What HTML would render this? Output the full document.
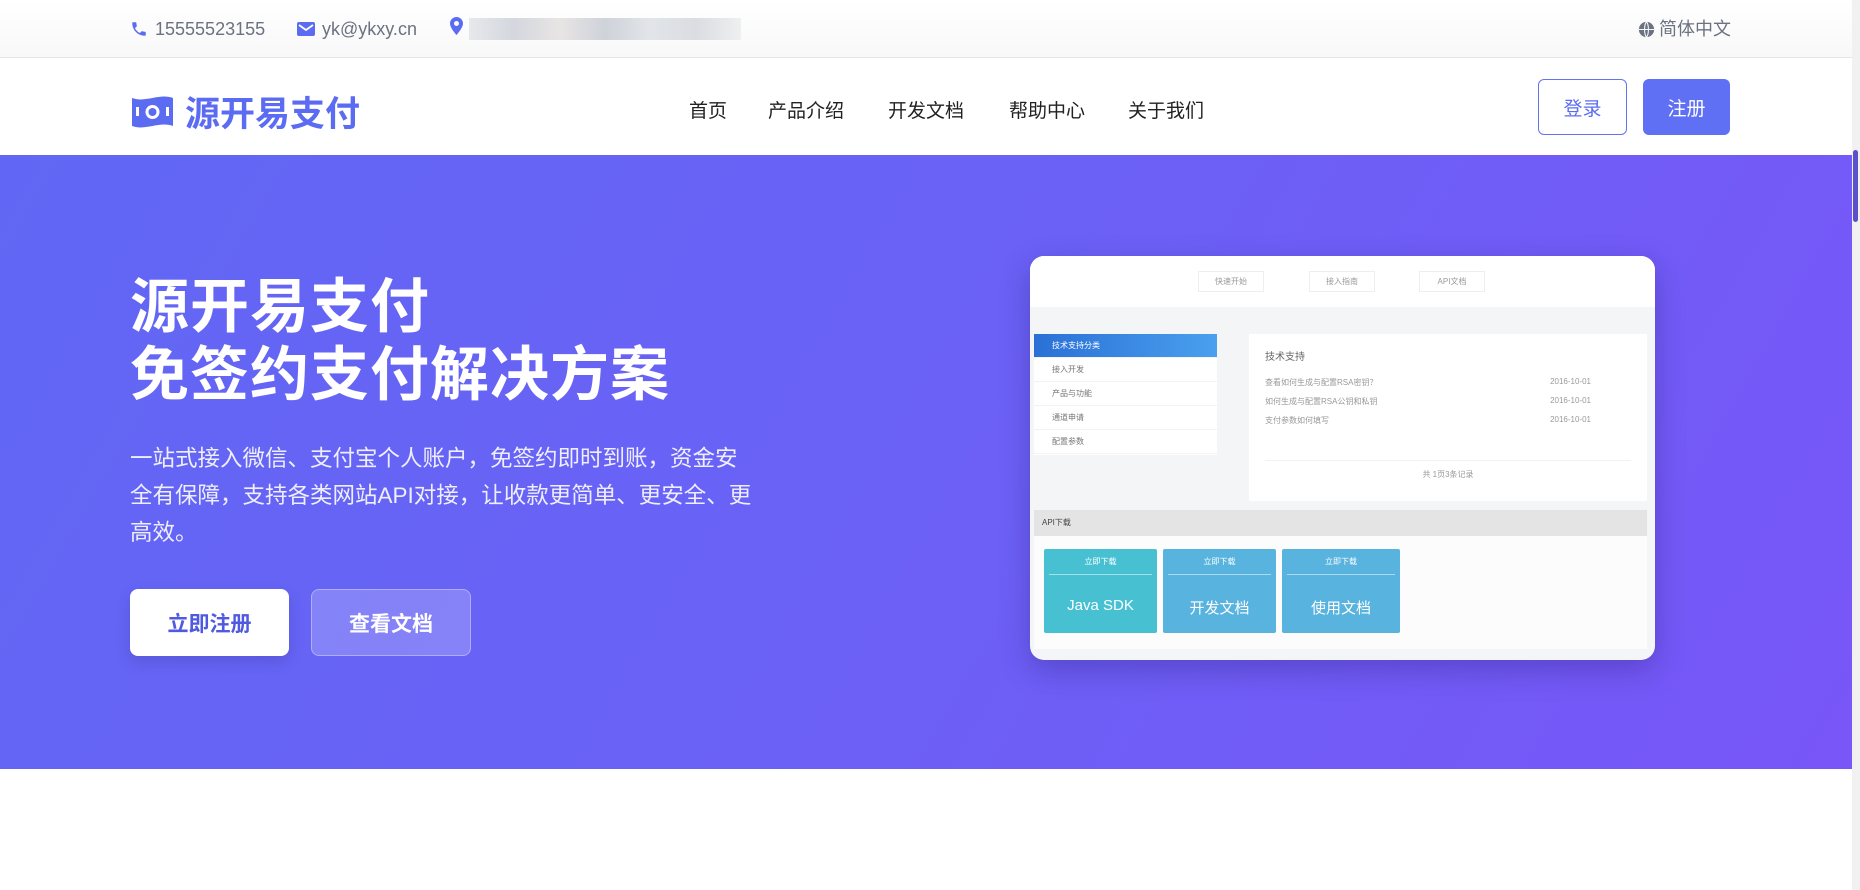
<!DOCTYPE html>
<html><head><meta charset="utf-8"><style>
*{margin:0;padding:0;box-sizing:border-box}
body{width:1860px;height:890px;overflow:hidden;background:#fff;font-family:"Liberation Sans","Noto Sans CJK SC",sans-serif;position:relative}
.top{position:absolute;left:0;top:0;width:1852px;height:58px;background:linear-gradient(#fff,#f8f8f8);border-bottom:1px solid #e6e6e6;color:#6b7280;font-size:18px}
.top .it{position:absolute;top:17px;display:flex;align-items:center;gap:7px;line-height:24px}
.blur{position:absolute;left:469px;top:18px;width:272px;height:22px;background:linear-gradient(90deg,#e4e6ea,#cfd3da,#e6e2e2,#c9ced6,#dfe2e6,#d6d9de,#eceef0);opacity:.9}
.nav{position:absolute;left:0;top:58px;width:1852px;height:97px;background:#fff}
.logo{position:absolute;left:130px;top:28px;display:flex;align-items:center;gap:10px;color:#5b6cf2;font-weight:bold;font-size:35px}
.menu a{position:absolute;top:42px;font-size:19px;color:#222;text-decoration:none;line-height:24px}
.btn1{position:absolute;left:1538px;top:21px;width:89px;height:56px;border:1px solid #6673f0;border-radius:6px;color:#5b6cf2;font-size:19px;display:flex;align-items:center;justify-content:center}
.btn2{position:absolute;left:1643px;top:21px;width:87px;height:56px;background:#5f70f5;border-radius:6px;color:#fff;font-size:19px;display:flex;align-items:center;justify-content:center}
.hero{position:absolute;left:0;top:155px;width:1852px;height:614px;background:linear-gradient(120deg,#6167f4 0%,#6b61f6 50%,#7856f8 100%)}
h1{position:absolute;left:130px;top:118px;color:#fff;font-size:59px;line-height:68px;font-weight:bold;letter-spacing:1px}
.p{position:absolute;left:130px;top:285px;white-space:nowrap;color:#eef;font-size:22.5px;line-height:37px}
.b1{position:absolute;left:130px;top:434px;width:159px;height:67px;background:#fff;border-radius:8px;color:#4f5ae0;font-weight:bold;font-size:21px;display:flex;align-items:center;justify-content:center;box-shadow:0 6px 14px rgba(40,40,120,.2)}
.b2{position:absolute;left:311px;top:434px;width:160px;height:67px;background:rgba(255,255,255,.2);border:1px solid rgba(255,255,255,.35);border-radius:8px;color:#fff;font-weight:bold;font-size:21px;display:flex;align-items:center;justify-content:center}
.card{position:absolute;left:1030px;top:101px;width:625px;height:404px;background:#f4f5f7;border-radius:14px;overflow:hidden;box-shadow:0 10px 30px rgba(30,20,100,.3);font-size:8px;color:#777}
.ctop{position:absolute;left:0;top:0;width:100%;height:51px;background:#fff}
.tab{position:absolute;top:15px;width:66px;height:21px;border:1px solid #eee;display:flex;align-items:center;justify-content:center;color:#999}
.lm{position:absolute;left:4px;top:78px;width:183px;height:121px;background:#fff}
.lm div{height:24px;line-height:24px;padding-left:18px;border-bottom:1px solid #f3f3f3}
.lm .h{background:linear-gradient(90deg,#2a70d6,#4aa0ee);color:#fff}
.rp{position:absolute;left:219px;top:78px;width:398px;height:167px;background:#fff;padding:14px 16px;color:#999}
.rp .row{display:flex;justify-content:space-between;padding-right:40px;height:19px}
.api{position:absolute;left:4px;top:254px;width:613px;height:139px;background:#fcfcfc}
.api .hd{height:26px;background:#e4e4e4;line-height:26px;padding-left:8px;color:#444}
.tile{position:absolute;top:39px;height:84px;border-radius:2px;color:#fff;text-align:center}
.tile .t{height:26px;line-height:26px;border-bottom:1px solid rgba(255,255,255,.5);margin:0 5px}
.tile .n{font-size:15px;margin-top:22px}
.sb{position:absolute;left:1852px;top:0;width:8px;height:890px;background:#f1f1f1}
.sb div{position:absolute;left:1px;top:150px;width:5px;height:72px;background:#5a52c8;border-radius:3px}
</style></head><body>
<div class="top">
 <div class="it" style="left:130px"><svg width="18" height="18" viewBox="0 0 24 24"><path fill="#5b6cf2" d="M6.6 10.8c1.4 2.8 3.8 5.1 6.6 6.6l2.2-2.2c.3-.3.7-.4 1-.2 1.1.4 2.300.6 3.6.6.6 0 1 .4 1 1V20c0 .6-.4 1-1 1C10.6 21 3 13.4 3 4c0-.6.4-1 1-1h3.5c.6 0 1 .4 1 1 0 1.3.2 2.5.6 3.6.1.3 0 .7-.2 1z"/></svg>15555523155</div>
 <div class="it" style="left:297px"><svg width="18" height="16" viewBox="0 0 18 16"><rect x="0" y="1" width="18" height="14" rx="2" fill="#5b6cf2"/><path d="M2 4l7 5 7-5" stroke="#fff" stroke-width="1.8" fill="none"/></svg>yk@ykxy.cn</div>
 <div class="it" style="left:450px"><svg width="13" height="18" viewBox="0 0 13 18"><path fill="#5b6cf2" d="M6.5 0C2.9 0 0 2.9 0 6.5 0 11 6.5 18 6.5 18S13 11 13 6.5C13 2.9 10.1 0 6.5 0zm0 9a2.5 2.5 0 110-5 2.5 2.5 0 010 5z"/></svg></div>
 <div class="blur"></div>
 <div class="it" style="left:1638px;gap:4px"><svg width="17" height="17" viewBox="0 0 20 20"><circle cx="10" cy="10" r="9" fill="#6b7280"/><path d="M1 10h18M10 1c-3 3-3 15 0 18M10 1c3 3 3 15 0 18" stroke="#f8f8f8" stroke-width="1.3" fill="none"/></svg>简体中文</div>
</div>
<div class="nav">
 <div class="logo"><svg width="45" height="36" viewBox="0 0 45 36"><path fill="#5b6cf2" d="M2 4c14 5 27-5 41 0v28c-14-5-27 5-41 0z"/><circle cx="22.5" cy="18" r="7" fill="#fff"/><circle cx="22.5" cy="18" r="4" fill="#5b6cf2"/><rect x="6" y="13" width="3" height="9" fill="#fff"/><rect x="36" y="13" width="3" height="9" fill="#fff"/></svg>源开易支付</div>
 <div class="menu"><a style="left:689px">首页</a><a style="left:768px">产品介绍</a><a style="left:888px">开发文档</a><a style="left:1009px">帮助中心</a><a style="left:1128px">关于我们</a></div>
 <div class="btn1">登录</div><div class="btn2">注册</div>
</div>
<div class="hero">
 <h1>源开易支付<br>免签约支付解决方案</h1>
 <div class="p">一站式接入微信、支付宝个人账户，免签约即时到账，资金安<br>全有保障，支持各类网站API对接，让收款更简单、更安全、更<br>高效。</div>
 <div class="b1">立即注册</div><div class="b2">查看文档</div>
 <div class="card">
  <div class="ctop"><div class="tab" style="left:168px">快速开始</div><div class="tab" style="left:279px">接入指南</div><div class="tab" style="left:389px">API文档</div></div>
  <div class="lm"><div class="h">技术支持分类</div><div>接入开发</div><div>产品与功能</div><div>通道申请</div><div>配置参数</div></div>
  <div class="rp"><div style="font-size:10px;color:#666;margin-bottom:14px">技术支持</div>
   <div class="row"><span>查看如何生成与配置RSA密钥？</span><span>2016-10-01</span></div>
   <div class="row"><span>如何生成与配置RSA公钥和私钥</span><span>2016-10-01</span></div>
   <div class="row"><span>支付参数如何填写</span><span>2016-10-01</span></div>
   <div style="text-align:center;margin-top:26px;border-top:1px solid #f2f2f2;padding-top:8px">共 1页3条记录</div></div>
  <div class="api"><div class="hd">API下载</div>
   <div class="tile" style="left:10px;width:113px;background:#47c1d2"><div class="t">立即下载</div><div class="n">Java SDK</div></div>
   <div class="tile" style="left:129px;width:113px;background:#58b3de"><div class="t">立即下载</div><div class="n">开发文档</div></div>
   <div class="tile" style="left:248px;width:118px;background:#58b3de"><div class="t">立即下载</div><div class="n">使用文档</div></div>
  </div>
 </div>
</div>
<div class="sb"><div></div></div>
</body></html>
